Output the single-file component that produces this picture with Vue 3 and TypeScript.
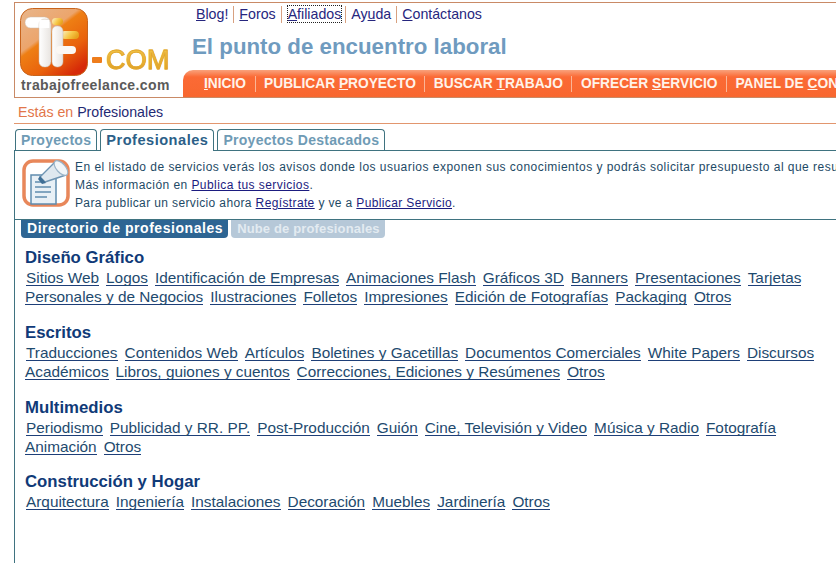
<script setup lang="ts">
interface Group { title: string; lines: string[][] }
const topLinks: [string, string, string][] = [
  ['', 'B', 'log!'], ['', 'F', 'oros'], ['', 'A', 'filiados'], ['Ay', 'u', 'da'], ['', 'C', 'ontáctanos']
]
const navLinks: [string, string, string][] = [
  ['', 'I', 'NICIO'], ['PUBLICAR ', 'P', 'ROYECTO'], ['BUSCAR ', 'T', 'RABAJO'], ['OFRECER ', 'S', 'ERVICIO'], ['PANEL DE ', 'C', 'ONTROL']
]
const groups: Group[] = [
  { title: 'Diseño Gráfico', lines: [
    ['Sitios Web', 'Logos', 'Identificación de Empresas', 'Animaciones Flash', 'Gráficos 3D', 'Banners', 'Presentaciones', 'Tarjetas'],
    ['Personales y de Negocios', 'Ilustraciones', 'Folletos', 'Impresiones', 'Edición de Fotografías', 'Packaging', 'Otros']
  ] },
  { title: 'Escritos', lines: [
    ['Traducciones', 'Contenidos Web', 'Artículos', 'Boletines y Gacetillas', 'Documentos Comerciales', 'White Papers', 'Discursos'],
    ['Académicos', 'Libros, guiones y cuentos', 'Correcciones, Ediciones y Resúmenes', 'Otros']
  ] },
  { title: 'Multimedios', lines: [
    ['Periodismo', 'Publicidad y RR. PP.', 'Post-Producción', 'Guión', 'Cine, Televisión y Video', 'Música y Radio', 'Fotografía'],
    ['Animación', 'Otros']
  ] },
  { title: 'Construcción y Hogar', lines: [
    ['Arquitectura', 'Ingeniería', 'Instalaciones', 'Decoración', 'Muebles', 'Jardinería', 'Otros']
  ] }
]
</script>

<template>
  <div class="page">
    <header class="head">
      <div class="brand">
        <div class="logo-row">
          <svg class="mark" width="68" height="68" viewBox="0 0 68 68">
            <defs>
              <linearGradient id="tile" x1="0" y1="0" x2="0.75" y2="1">
                <stop offset="0" stop-color="#e8b68c" />
                <stop offset="0.42" stop-color="#eca56c" />
                <stop offset="0.47" stop-color="#ee7f14" />
                <stop offset="0.75" stop-color="#e9620c" />
                <stop offset="1" stop-color="#d62a08" />
              </linearGradient>
              <linearGradient id="bar" x1="0" y1="0" x2="1" y2="0.4">
                <stop offset="0" stop-color="#fbf2cf" />
                <stop offset="0.6" stop-color="#f6c848" />
                <stop offset="1" stop-color="#e8a21e" />
              </linearGradient>
              <linearGradient id="white" x1="0" y1="0" x2="1" y2="0">
                <stop offset="0" stop-color="#ffffff" />
                <stop offset="1" stop-color="#e8e4e0" />
              </linearGradient>
            </defs>
            <rect x="0.500" y="0.500" width="67" height="67" rx="12" fill="url(#tile)" stroke="#c8641c" stroke-width="1" />
            <rect x="32" y="10" width="11" height="7" rx="3.500" fill="url(#bar)" />
            <rect x="41" y="23" width="18" height="8" rx="4" fill="url(#bar)" />
            <rect x="32" y="18" width="11" height="41" rx="5" fill="url(#white)" stroke="#c9b8a8" stroke-width="0.500" />
            <rect x="36" y="38" width="20" height="8" rx="4" fill="#fbf8f4" />
            <rect x="5" y="9" width="25" height="11" rx="5.500" fill="#fff" stroke="#c9b8a8" stroke-width="0.500" />
            <rect x="19" y="11" width="12" height="48" rx="5.500" fill="url(#white)" stroke="#c9b8a8" stroke-width="0.500" />
            <rect x="19.300" y="12" width="10" height="8" fill="#fff" />
          </svg>
          <span class="com"><i class="dash"></i><b>COM</b></span>
        </div>
        <div class="site">trabajofreelance.com</div>
      </div>
      <div class="head-main">
        <nav class="toplinks">
          <span v-for="(l, i) in topLinks" :key="i" class="top-item">
            <a :class="{ focus: i === 2 }">{{ l[0] }}<u>{{ l[1] }}</u>{{ l[2] }}</a>
          </span>
        </nav>
        <h1 class="slogan">El punto de encuentro laboral</h1>
        <nav class="mainnav">
          <a v-for="(l, i) in navLinks" :key="i">{{ l[0] }}<u>{{ l[1] }}</u>{{ l[2] }}</a>
        </nav>
      </div>
    </header>

    <div class="crumb"><span>Estás en</span> Profesionales</div>

    <div class="tabs">
      <span class="tab">Proyectos</span>
      <span class="tab active">Profesionales</span>
      <span class="tab">Proyectos Destacados</span>
    </div>

    <main class="panel">
      <section class="info">
        <svg class="info-icon" width="50" height="50" viewBox="0 0 50 50">
          <rect x="3" y="3" width="44" height="44" rx="9" fill="#fff" stroke="#e8875a" stroke-width="3.500" />
          <path d="M10 17 H35 V46 H10 Z" fill="#e8f0f6" stroke="#5f8cae" stroke-width="1.500" />
          <path d="M14 24 H22 M14 29 H30 M14 34 H30 M14 39 H26" stroke="#5f8cae" stroke-width="1.600" fill="none" />
          <path d="M19 19 L34 4 L45 17 L24 24 Z" fill="#dfe8ef" stroke="#6e94b2" stroke-width="1.400" stroke-linejoin="round" />
          <path d="M19 18 L25 25 L21 26 L17 21 Z" fill="#3f6f96" />
          <ellipse cx="40" cy="10" rx="4.500" ry="9" transform="rotate(-42 40 10)" fill="#f1f5f8" stroke="#9ab4c8" stroke-width="1.200" />
        </svg>
        <div class="info-text">
          <p>En el listado de servicios verás los avisos donde los usuarios exponen sus conocimientos y podrás solicitar presupuesto al que resulte más conveniente.</p>
          <p>Más información en <a>Publica tus servicios</a>.</p>
          <p>Para publicar un servicio ahora <a>Regístrate</a> y ve a <a>Publicar Servicio</a>.</p>
        </div>
      </section>

      <div class="subtabs">
        <span class="subtab on">Directorio de profesionales</span>
        <span class="subtab off">Nube de profesionales</span>
      </div>

      <section v-for="g in groups" :key="g.title" class="group">
        <h2>{{ g.title }}</h2>
        <div v-for="(line, i) in g.lines" :key="i" class="line" :class="{ first: i === 0 }">
          <a v-for="item in line" :key="item">{{ item }}</a>
        </div>
      </section>
    </main>
  </div>
</template>

<style scoped>
.page {
  width: 836px;
  height: 563px;
  overflow: hidden;
  font-family: "Liberation Sans", Arial, sans-serif;
  background: #fff;
}
.head {
  display: flex;
  width: 1000px;
  height: 96px;
  margin: 2px 0 0 14px;
  border: 1px solid #c98a66;
  border-right: none;
  box-sizing: border-box;
}
.brand { width: 168px; flex: none; }
.logo-row { display: flex; align-items: flex-end; padding: 5px 0 0 5px; }
.mark { flex: none; }
.com {
  display: flex;
  align-items: center;
  margin: 0 0 3px 4px;
}
.com b {
  font-size: 27px;
  line-height: 26px;
  font-weight: normal;
  letter-spacing: 0.2px;
  -webkit-text-stroke: 0.8px #e2a62c;
  background: linear-gradient(#f2c64a, #e9b030 60%, #d99a20);
  -webkit-background-clip: text;
  background-clip: text;
  color: transparent;
}
.dash { width: 10px; height: 6px; background: #ee7d1c; border-radius: 1px; margin-right: 4px; }
.site {
  font-size: 14px;
  font-weight: bold;
  letter-spacing: 0.4px;
  color: #5a5a5a;
  margin: 1px 0 0 6px;
  line-height: 16px;
}
.head-main { flex: 1; min-width: 0; }
.toplinks { display: flex; padding: 2px 0 0 13px; height: 18px; align-items: center; }
.top-item {
  font-size: 14.2px;
  line-height: 17px;
  padding: 0 5px;
  border-left: 1px solid #d8a180;
}
.top-item:first-child { border-left: none; padding-left: 0; }
.top-item a { color: #26267e; }
.top-item a.focus { outline: 1px dotted #222; outline-offset: 0; }
.top-item:has(.focus) { padding: 0 4px 0 6px; }
.slogan {
  margin: 11px 0 0 9px;
  font-size: 22.3px;
  line-height: 26px;
  font-weight: bold;
  color: #6f9bbf;
}
.mainnav {
  display: flex;
  height: 27px;
  box-sizing: border-box;
  margin: 10px 0 0 0;
  padding: 0 0 0 16px;
  align-items: center;
  border-radius: 10px 0 0 0;
  background: linear-gradient(#f9a27c 0, #fb6a35 7px, #f8672f 100%);
}
.mainnav a {
  font-size: 13.75px;
  font-weight: bold;
  color: #fff3ea;
  white-space: nowrap;
  line-height: 16px;
  padding: 0 8.5px;
  border-left: 1px solid #fbb596;
}
.mainnav a:first-child { border-left: none; padding-left: 5px; }
.crumb {
  margin-left: 18px;
  font-size: 14.2px;
  line-height: 28px;
  height: 25px;
  color: #1f2a73;
}
.crumb span { color: #e2764a; }
.tabs {
  display: flex;
  gap: 3px;
  margin: 0 0 0 14px;
  padding: 5px 0 0 1px;
  border-top: 1px solid #e2966e;
  height: 21px;
  align-items: flex-end;
  width: 821px;
}
.tab {
  height: 20px;
  padding: 0 5px;
  line-height: 20px;
  font-size: 14px;
  font-weight: bold;
  letter-spacing: 0.28px;
  color: #6f9bb5;
  background: #fff;
  border: 1px solid #3f7380;
  border-bottom: none;
  border-radius: 4px 4px 0 0;
}
.tab.active {
  color: #2c5f88;
  height: 21px;
  line-height: 21px;
  font-size: 14.6px;
  letter-spacing: 0.5px;
  position: relative;
  top: 1px;
}
.panel {
  margin-left: 14px;
  height: 420px;
  border-left: 1px solid #3f7380;
  border-top: 1px solid #3f7380;
}
.info {
  display: flex;
  width: 1000px;
  height: 69px;
  border-bottom: 1px solid #3f7380;
  box-sizing: border-box;
  padding: 7px 0 0 6px;
}
.info-icon { flex: none; margin: 0 4px 0 0; }
.info-text p {
  margin: 0;
  font-size: 12px;
  line-height: 18px;
  letter-spacing: 0.44px;
  white-space: nowrap;
  color: #1e4a66;
}
.info-text p:first-child { letter-spacing: 0.47px; }
.info-text p:last-child { letter-spacing: 0.37px; }
.info-text a { color: #1c1c80; text-decoration: underline; }
.subtabs { display: flex; gap: 3px; padding-left: 6px; }
.subtab {
  height: 18px;
  line-height: 17px;
  padding: 0 5px 0 6px;
  font-size: 14px;
  font-weight: bold;
  letter-spacing: 0.55px;
  border-radius: 0 0 4px 4px;
  color: #fff;
}
.on { background: #2e6593; }
.off { background: #b6c8d8; color: #e3ebf1; font-size: 13px; letter-spacing: 0.15px; }
.group { padding-left: 10px; margin-bottom: 16.75px; }
.subtabs + .group { margin-top: 11px; }
h2 {
  margin: 0;
  font-size: 16.75px;
  line-height: 18px;
  font-weight: bold;
  color: #103a78;
}
.line { display: flex; gap: 7px; white-space: nowrap; height: 19px; line-height: 18px; align-items: flex-start; }
.line.first { padding-left: 1px; margin-top: 2px; }
.line a {
  font-size: 15.35px;
  color: #1e4a6e;
  line-height: 17px;
  height: 16px;
  border-bottom: 1px solid #1e3f78;
}
</style>
